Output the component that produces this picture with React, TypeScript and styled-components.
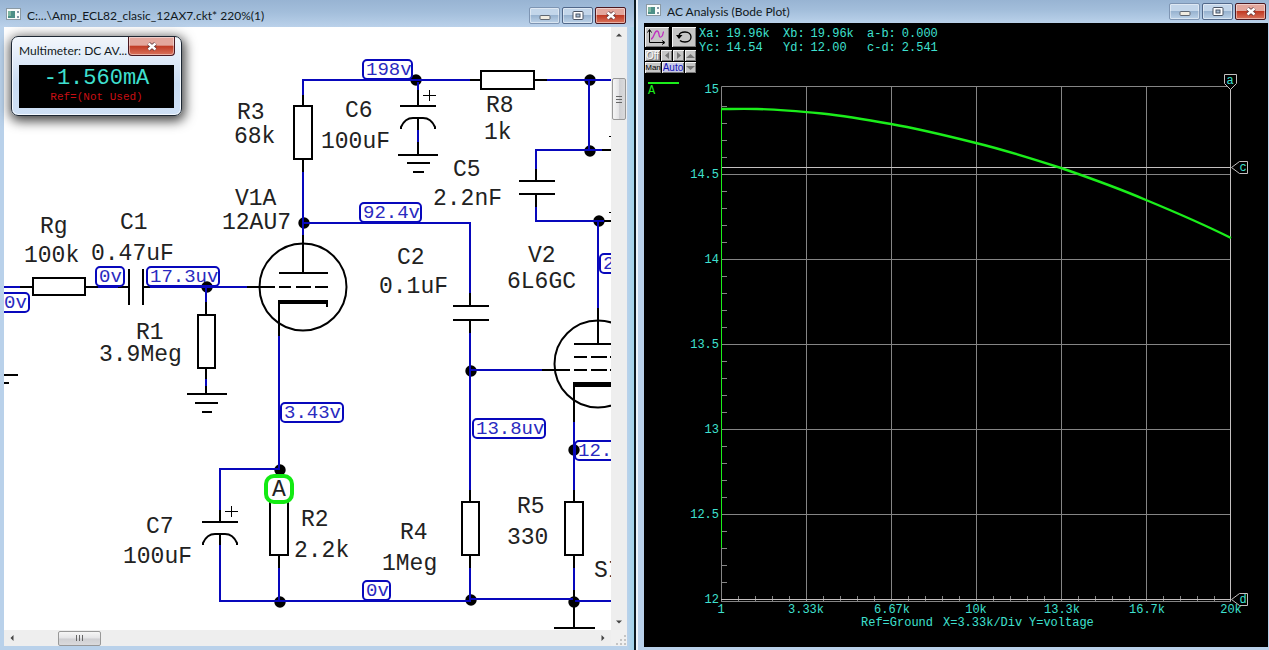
import React from "react";
import styled, { createGlobalStyle, css } from "styled-components";

const MONO = '"Liberation Mono", "Courier New", monospace';
const UI = 'Lato, "Segoe UI", sans-serif';
const WIRE = "#0808bc";
const INK = "#000";
const CYAN = "#3fe0d0";
const TRACE = "#1bee1b";

const GlobalStyle = createGlobalStyle`
  *, *::before, *::after { box-sizing: border-box; }
  body { margin: 0; background: #b9d1ea; }
  button { font: inherit; padding: 0; margin: 0; }
`;

/* ---------- Window frames ---------- */

const Desktop = styled.main`
  display: grid;
  grid-template-columns: minmax(0, 636fr) minmax(0, 633fr);
  min-height: 100vh;
  background: #b9d1ea;
`;

const SchematicWindow = styled.section`
  display: flex;
  flex-direction: column;
  padding: 0 7px 4px 4px;
  background: linear-gradient(90deg, #b9d1ea 0 99%, #9fd4ea 100%);
  border-right: 2px solid #0b1a22;
`;

const PlotWindow = styled.section`
  display: flex;
  flex-direction: column;
  padding: 0 1px 3px 6px;
  border-left: 2px solid #eef5fb;
  background: #b9d1ea;
`;

const TitleBar = styled.header<{ $height: number; $top: number }>`
  display: flex;
  align-items: flex-start;
  gap: 5px;
  height: ${(p) => p.$height}px;
  padding-top: ${(p) => p.$top}px;
  margin: 0 -7px 0 -4px;
  padding-left: 6px;
  padding-right: 8px;
  background: linear-gradient(#98b4d3, #a3bedb 45%, #bad1ea);
`;

const PlotTitleBar = styled(TitleBar)`
  margin: 0 -1px 0 -6px;
  padding-left: 8px;
  padding-right: 3px;
`;

const Title = styled.h1`
  flex: 1;
  min-width: 0;
  margin: 0;
  overflow: hidden;
  font: 400 12px/17px ${UI};
  color: #101820;
  white-space: nowrap;
`;

const Controls = styled.div`
  display: flex;
  gap: 2px;
`;

const ControlButton = styled.button<{ $kind?: "min" | "max" | "close" }>`
  display: grid;
  place-items: center;
  width: 31px;
  height: 17px;
  border: 1px solid #51688a;
  border-radius: 2px;
  background: linear-gradient(#c3d6ea 0 48%, #98b3d0 50%, #bcd2e8);
  box-shadow: inset 0 0 0 1px rgba(255, 255, 255, 0.45);
  ${(p) => p.$kind === "min" && css`border-color: #7e95b3;`}
  ${(p) =>
    p.$kind === "close" &&
    css`
      border-color: #4b1820;
      background: linear-gradient(#e3a79d 0 46%, #c03a24 50%, #d9735c);
    `}
`;

const MeterClose = styled(ControlButton)`
  width: 47px;
  height: 19px;
  border-top: 0;
  border-radius: 0 0 4px 4px;
`;

function WindowIcon() {
  return (
    <svg width="16" height="14" viewBox="0 0 16 14" aria-hidden="true">
      <rect x="0.5" y="1.5" width="14" height="11" fill="#f8fbfb" stroke="#8b9aa4" />
      <rect x="2" y="4" width="7" height="7" fill="#4c8f88" />
      <rect x="2" y="4" width="3" height="5" fill="#7db5a0" />
      <rect x="11" y="4" width="2" height="2" fill="#8298a8" />
      <rect x="11" y="9" width="2" height="2" fill="#8298a8" />
    </svg>
  );
}

function CloseGlyph() {
  return (
    <svg width="12" height="9" viewBox="0 0 12 9" aria-hidden="true">
      <path d="M2.5 1.5 L9.5 7.5 M9.5 1.5 L2.5 7.5" stroke="#5d3438" strokeWidth="4" />
      <path d="M2.5 1.5 L9.5 7.5 M9.5 1.5 L2.5 7.5" stroke="#fff" strokeWidth="2.4" />
    </svg>
  );
}

function WindowControls() {
  return (
    <Controls>
      <ControlButton $kind="min" aria-label="Minimize">
        <svg width="12" height="9" viewBox="0 0 12 9" aria-hidden="true">
          <rect x="1" y="4.5" width="10" height="4" rx="1" fill="#f1ece0" stroke="#5f6670" />
        </svg>
      </ControlButton>
      <ControlButton $kind="max" aria-label="Maximize">
        <svg width="12" height="9" viewBox="0 0 12 9" aria-hidden="true">
          <rect x="1" y="0.5" width="10" height="8" rx="1" fill="#fff" stroke="#4a5464" />
          <rect x="4" y="3" width="4" height="3" fill="#a9bed4" stroke="#4a5464" />
        </svg>
      </ControlButton>
      <ControlButton $kind="close" aria-label="Close">
        <CloseGlyph />
      </ControlButton>
    </Controls>
  );
}

/* ---------- Schematic pane ---------- */

const ScrollPane = styled.div`
  position: relative;
  display: grid;
  flex: 1;
  grid-template-columns: minmax(0, 1fr) 16px;
  grid-template-rows: minmax(0, 1fr) 16px;
  min-height: 619px;
  background: #f0f0f0;
`;

const SchematicSvg = styled.svg`
  display: block;
  width: 100%;
  height: 100%;
  background: #fff;
  overflow: hidden;
`;

const ScrollTrack = styled.div<{ $vertical?: boolean }>`
  display: flex;
  flex-direction: ${(p) => (p.$vertical ? "column" : "row")};
  align-items: center;
  justify-content: space-between;
  padding: ${(p) => (p.$vertical ? "4px 0" : "0 4px")};
  background: #eeeeee;
`;

const ScrollThumb = styled.div<{ $vertical?: boolean }>`
  display: grid;
  place-items: center;
  border: 1px solid #989898;
  border-radius: 2px;
  width: ${(p) => (p.$vertical ? "14px" : "43px")};
  height: ${(p) => (p.$vertical ? "42px" : "15px")};
  margin: ${(p) => (p.$vertical ? "39px 0 auto" : "0 auto 0 42px")};
  background: linear-gradient(
    ${(p) => (p.$vertical ? "90deg" : "180deg")},
    #f6f6f6,
    #e4e4e6 48%,
    #cfcfd2 52%,
    #dadadc
  );
`;

const Grip = styled.svg`
  place-self: end;
  display: block;
`;

function Arrow({ d }: { d: string }) {
  return (
    <svg width="8" height="8" viewBox="0 0 8 8" aria-hidden="true">
      <path d={d} fill="#444" />
    </svg>
  );
}

type Pt = [number, number];

const blueWires = [
  "M303 96V80H470", "M547 80H611", "M589 80V150", "M602 150H536V170",
  "M536 207V221H604", "M598 221V308", "M303 172V240", "M303 223H470V294",
  "M470 333V490", "M471 370H542", "M574 422V490", "M574 568V590",
  "M470 568V601", "M4 287H20", "M97 287H118", "M150 287H247", "M206 287V303",
  "M206 379V386", "M279 336V469", "M280 469H220V510", "M220 545V601H471",
  "M471 599H574", "M574 601H611", "M279 568V601",
  "M418 82V92", "M418 130V142",
];

const blackWires = [
  "M303 95V106", "M303 159V172", "M470 80H481", "M534 80H547",
  "M602 150H611", "M536 169V181", "M519 181H555", "M519 194H555", "M536 194V207",
  "M604 221H611", "M418 90V106", "M400 106H436",
  "M401 129V127Q405 118 413 118H423Q431 118 435 127V129",
  "M418 118V130", "M418 142V155", "M398 155H438", "M407 163H430", "M413 172H424",
  "M470 293V306", "M453 306H489", "M453 320H489", "M470 320V333",
  "M470 490V502", "M470 555V568", "M574 490V502", "M574 555V568",
  "M574 590V628", "M554 628H595", "M20 287H33", "M85 287H98",
  "M118 287H129", "M129 269V305", "M143 269V305", "M143 287H150",
  "M206 302V315", "M206 368V379", "M206 386V394",
  "M187 394H227", "M195 403H218", "M202 412H212", "M4 375H18", "M4 383H9",
  "M220 510V522", "M202 522H238",
  "M203 545V543Q207 534 215 534H225Q233 534 237 543V545",
  "M220 534V545", "M279 555V568",
  "M303 235V273", "M279 273H328", "M247 287H275", "M279 287H291",
  "M296 287H311", "M315 287H328", "M279 336V301", "M327 301V307",
  "M598 308V344", "M574 344H611", "M574 357H587", "M591 357H607", "M610 357H612",
  "M542 370H570", "M574 370H587", "M591 370H607", "M610 370H612", "M574 384V422",
];

const resistors: [number, number, number, number][] = [
  [294, 106, 18, 53], [481, 71, 53, 18], [33, 278, 52, 17], [198, 315, 17, 53],
  [462, 502, 17, 53], [565, 502, 18, 53], [270, 502, 18, 53],
];

const nodes: Pt[] = [
  [416, 80], [590, 80], [590, 151], [599, 221], [304, 223], [471, 371],
  [574, 450], [207, 287], [280, 470], [280, 602], [471, 600], [574, 602],
];

const partLabels: [string, number, number][] = [
  ["R3", 237, 119], ["68k", 234, 143], ["C6", 345, 117], ["100uF", 321, 148],
  ["R8", 486, 112], ["1k", 484, 139], ["C5", 453, 176], ["2.2nF", 433, 205],
  ["V1A", 235, 205], ["12AU7", 222, 229], ["Rg", 40, 233], ["100k", 24, 262],
  ["C1", 120, 229], ["0.47uF", 91, 260], ["R1", 136, 339], ["3.9Meg", 99, 361],
  ["C2", 397, 264], ["0.1uF", 379, 293], ["V2", 528, 262], ["6L6GC", 507, 288],
  ["R2", 301, 526], ["2.2k", 294, 557], ["C7", 146, 533], ["100uF", 123, 563],
  ["R4", 400, 539], ["1Meg", 382, 570], ["R5", 517, 513], ["330", 507, 544],
  ["SI", 594, 577],
];

const voltages: { text: string; x: number; y: number; w: number }[] = [
  { text: "198v", x: 363, y: 60, w: 49 },
  { text: "92.4v", x: 360, y: 203, w: 61 },
  { text: "0v", x: 96, y: 267, w: 28 },
  { text: "17.3uv", x: 147, y: 267, w: 72 },
  { text: "0v", x: 1, y: 293, w: 28 },
  { text: "3.43v", x: 281, y: 403, w: 62 },
  { text: "13.8uv", x: 473, y: 419, w: 72 },
  { text: "0v", x: 363, y: 581, w: 27 },
  { text: "2", x: 600, y: 254, w: 50 },
  { text: "12.", x: 575, y: 441, w: 60 },
];

function Schematic() {
  return (
    <SchematicSvg role="img" aria-label="Amplifier schematic">
      <g transform="translate(-4 -27)" fill="none" strokeWidth="2">
        <g fill={INK}>
          {nodes.map(([x, y]) => (
            <circle key={`${x}-${y}`} cx={x} cy={y} r="5.7" />
          ))}
        </g>
        <path d={blueWires.join("")} stroke={WIRE} />
        <path d={blackWires.join("")} stroke={INK} />
        <g stroke={INK} fill="#fff">
          {resistors.map(([x, y, w, h]) => (
            <rect key={`${x}-${y}`} x={x} y={y} width={w} height={h} />
          ))}
        </g>
        <g stroke={INK}>
          <circle cx="303" cy="287" r="43.5" />
          <circle cx="598" cy="364" r="43.5" />
          <path d="M278 302H328" strokeWidth="4" />
          <path d="M573 384.500H611" strokeWidth="5" />
          <path d="M423 95.500H436M429.500 90V101M225 511.500H238M231.500 506V517" strokeWidth="1" />
          <path d="M609 136.500H611M609 212.500H611" strokeWidth="1" />
        </g>
        <g stroke={WIRE}>
          {voltages.map((v) => (
            <rect key={`${v.x}-${v.y}`} x={v.x} y={v.y} width={v.w} height="19" rx="4" />
          ))}
        </g>
        <g fontFamily={MONO} fontSize="19" fill="#2a2ac0">
          {voltages.map((v) => (
            <text key={`${v.x}-${v.y}`} x={v.x + 3} y={v.y + 15}>{v.text}</text>
          ))}
        </g>
        <g fontFamily={MONO} fontSize="23" fill="#222">
          {partLabels.map(([t, x, y]) => (
            <text key={`${t}-${x}`} x={x} y={y}>{t}</text>
          ))}
        </g>
        <rect x="266" y="476" width="26" height="26" rx="8" fill="#fff" stroke="#12ea12" strokeWidth="4" />
        <text x="279" y="496" textAnchor="middle" fontFamily={MONO} fontSize="23" fill="#222">A</text>
      </g>
    </SchematicSvg>
  );
}

/* ---------- Multimeter ---------- */

const Meter = styled.aside`
  position: absolute;
  top: 9px;
  left: 7px;
  width: 171px;
  padding: 0 7px 7px;
  border: 1px solid #1d2733;
  border-radius: 7px;
  background: linear-gradient(#f3f7fc, #dfeaf8 30%, #c9dcf3 60%, #cfe0f5);
  box-shadow: inset 0 0 0 1px #f4f9ff, 1px 3px 12px 2px rgba(0, 0, 0, 0.75);
`;

const MeterHeader = styled.header`
  display: flex;
  justify-content: space-between;
  height: 28px;
  margin-right: -1px;
`;

const MeterTitle = styled.h2`
  margin: 0;
  padding-top: 5px;
  font: 400 12px/17px ${UI};
  color: #101820;
  white-space: nowrap;
`;

const MeterDisplay = styled.div`
  display: flex;
  flex-direction: column;
  align-items: center;
  height: 43px;
  padding-top: 2px;
  background: #000;
  font-family: ${MONO};
`;

const Reading = styled.output`
  font-size: 22px;
  line-height: 23px;
  color: ${CYAN};
`;

const Reference = styled.span`
  font-size: 11px;
  line-height: 14px;
  color: #c80f14;
`;

/* ---------- Bode plot ---------- */

const PlotPanel = styled.div`
  flex: 1;
  background: #000;
`;

const PlotHeader = styled.div`
  display: flex;
  gap: 3px;
  height: 51px;
  padding: 4px 0 0 1px;
`;

const Toolbar = styled.div`
  display: flex;
  flex-direction: column;
  width: 51px;
`;

const ToolRow = styled.div`
  display: flex;
  justify-content: space-between;
  margin-bottom: 1px;
  &:first-child { margin-bottom: 3px; }
`;

const ToolButton = styled.button<{ $w: number; $tall?: boolean; $tone?: string; $font?: number }>`
  display: flex;
  align-items: center;
  justify-content: center;
  width: ${(p) => p.$w}px;
  height: ${(p) => (p.$tall ? 20 : 11)}px;
  border: 0;
  box-shadow: inset 1px 1px #f4f4f4, inset -1px -1px #777;
  background: ${(p) => (p.$tone === "blue" ? "#c9cbe8" : "#c6c6c6")};
  color: ${(p) => (p.$tone === "blue" ? "#1414b4" : p.$tone === "off" ? "#fafafa" : "#000")};
  text-shadow: ${(p) => (p.$tone === "off" ? "1px 1px 0 #777" : "none")};
  font: 400 ${(p) => p.$font ?? 10}px/11px "Liberation Sans", Arial, sans-serif;
`;

const Readouts = styled.dl`
  display: grid;
  grid-template-columns: repeat(3, 84px);
  grid-auto-rows: 14px;
  margin: 0;
  font: 400 12px/14px ${MONO};
  color: ${CYAN};
  white-space: pre;
`;

const Readout = styled.div`
  display: flex;
  gap: 6px;
  dt, dd { margin: 0; }
`;

const Chart = styled.svg`
  display: block;
  width: 100%;
`;

const readings = [
  ["Xa:", "19.96k"], ["Xb:", "19.96k"], ["a-b:", "0.000"],
  ["Yc:", "14.54"], ["Yd:", "12.00"], ["c-d:", "2.541"],
];

const xGrid = [806.5, 891.5, 976.5, 1061.5, 1146.5];
const yGrid = [174.5, 259.5, 344.5, 429.5, 514.5];
const xLabels: [string, number][] = [
  ["1", 721], ["3.33k", 806], ["6.67k", 892], ["10k", 976],
  ["13.3k", 1062], ["16.7k", 1147], ["20k", 1231],
];
const yLabels: [string, number][] = [
  ["15", 93], ["14.5", 178], ["14", 263], ["13.5", 348], ["13", 433], ["12.5", 518], ["12", 603],
];

const yTicks = Array.from({ length: 29 }, (_, i) => 106.5 + i * 17);
const xTicks = Array.from({ length: 29 }, (_, i) => 738.5 + i * 17);

function BodeChart() {
  return (
    <Chart viewBox="644 74 624 573" role="img" aria-label="Voltage against frequency">
      <g stroke="#858585" fill="none">
        <path d={xGrid.map((x) => `M${x} 86V601`).join("")} />
        <path d={yGrid.map((y) => `M721 ${y}H1231`).join("")} />
        <path d="M721.500 601V86.500H1230" />
        <path d={yTicks.map((y) => `M722 ${y}H727`).join("")} />
        <path d={xTicks.map((x) => `M${x} 596V601`).join("")} />
        <path d="M721 601.500H1231" />
      </g>
      <g stroke="#c4c0c0" fill="#000">
        <path d="M1230.500 88V601M721 167.500H1231M721 599.500H1231" />
        <path d="M1224.500 74.500H1236.500V83.500L1230.500 89.500L1224.500 83.500Z" />
        <path d="M1231.500 167.500L1239.500 161.500H1247.500V173.500H1239.500Z" />
        <path d="M1231.500 599.500L1239.500 593.500H1247.500V605.500H1239.500Z" />
      </g>
      <g stroke={TRACE} fill="none">
        <path d="M721.500 109V548" strokeWidth="1" />
        <path
          d="M721 109C730 109 745 108.700 757 109C779 109.500 806 112 822 113.500C846 116 869 120 891 124C920 129 948 136 976 143C1005 150 1033 159 1061 168C1090 178 1118 188 1146 200C1175 212 1203 224 1231 238"
          strokeWidth="2.400"
        />
        <path d="M648 83H679" strokeWidth="2" />
      </g>
      <g fontFamily={MONO} fontSize="12" fill={CYAN}>
        <text x="648" y="94" fill={TRACE}>A</text>
        <g textAnchor="end">
          {yLabels.map(([t, y]) => <text key={t} x="719" y={y}>{t}</text>)}
        </g>
        <g textAnchor="middle">
          {xLabels.map(([t, x]) => <text key={t} x={x} y="613">{t}</text>)}
          <text x="1230" y="84">a</text>
          <text x="1243" y="171">c</text>
          <text x="1243" y="603">d</text>
        </g>
        <text x="861" y="626">Ref=Ground</text>
        <text x="943" y="626">X=3.33k/Div</text>
        <text x="1029" y="626">Y=voltage</text>
      </g>
    </Chart>
  );
}

export default function App() {
  return (
    <>
      <GlobalStyle />
      <Desktop>
        <SchematicWindow>
          <TitleBar $height={27} $top={7}>
            <WindowIcon />
            <Title>C:...\Amp_ECL82_clasic_12AX7.ckt* 220%(1)</Title>
            <WindowControls />
          </TitleBar>
          <ScrollPane>
            <Schematic />
            <ScrollTrack $vertical>
              <Arrow d="M1 5.500L4 2.500L7 5.500Z" />
              <ScrollThumb $vertical>
                <svg width="8" height="9" viewBox="0 0 8 9" aria-hidden="true">
                  <path d="M1 1.500H7M1 4.500H7M1 7.500H7" stroke="#666" />
                </svg>
              </ScrollThumb>
              <Arrow d="M1 2.500L4 5.500L7 2.500Z" />
            </ScrollTrack>
            <ScrollTrack>
              <Arrow d="M5.500 1L2.500 4L5.500 7Z" />
              <ScrollThumb>
                <svg width="9" height="8" viewBox="0 0 9 8" aria-hidden="true">
                  <path d="M1.500 1V7M4.500 1V7M7.500 1V7" stroke="#666" />
                </svg>
              </ScrollThumb>
              <Arrow d="M2.500 1L5.500 4L2.500 7Z" />
            </ScrollTrack>
            <Grip width="12" height="12" viewBox="0 0 12 12" aria-hidden="true">
              <path d="M1 9h2v2h-2zM5 9h2v2h-2zM9 9h2v2h-2zM5 5h2v2h-2zM9 5h2v2h-2zM9 1h2v2h-2z" fill="#c4c4c4" />
            </Grip>
            <Meter>
              <MeterHeader>
                <MeterTitle>Multimeter: DC AV...</MeterTitle>
                <MeterClose $kind="close" aria-label="Close multimeter">
                  <CloseGlyph />
                </MeterClose>
              </MeterHeader>
              <MeterDisplay>
                <Reading>-1.560mA</Reading>
                <Reference>Ref=(Not Used)</Reference>
              </MeterDisplay>
            </Meter>
          </ScrollPane>
        </SchematicWindow>

        <PlotWindow>
          <PlotTitleBar $height={23} $top={3}>
            <WindowIcon />
            <Title>AC Analysis (Bode Plot)</Title>
            <WindowControls />
          </PlotTitleBar>
          <PlotPanel>
            <PlotHeader>
              <Toolbar>
                <ToolRow>
                  <ToolButton $w={24} $tall aria-label="Scale axes">
                    <svg width="22" height="18" viewBox="0 0 22 18" fill="none" aria-hidden="true">
                      <path d="M3.500 2V14.500H18M1.500 4.500L3.500 1.500L5.500 4.500M16 12.500L19 14.500L16 16.500" stroke="#000" />
                      <path d="M5 11C8 11 8 3 11 3S12 10 15 9S16 4 18 4" stroke="#c030c0" strokeWidth="1.300" />
                    </svg>
                  </ToolButton>
                  <ToolButton $w={24} $tall aria-label="Reset">
                    <svg width="22" height="18" viewBox="0 0 22 18" fill="none" aria-hidden="true">
                      <path d="M6 8C6 5 9 4 12 4C16 4 18 6.500 18 9S16 14 12 14C10 14 8 13.500 7 12.500" stroke="#000" strokeWidth="1.300" />
                      <path d="M3 7H9.500L6 11Z" fill="#000" />
                    </svg>
                  </ToolButton>
                </ToolRow>
                <ToolRow>
                  <ToolButton $w={15} $tone="off">Off</ToolButton>
                  <ToolButton $w={11} aria-label="Previous">
                    <svg width="8" height="9" viewBox="0 0 8 9" aria-hidden="true"><path d="M6 1L2 4.500L6 8Z" fill="#777" /></svg>
                  </ToolButton>
                  <ToolButton $w={11} aria-label="Next">
                    <svg width="8" height="9" viewBox="0 0 8 9" aria-hidden="true"><path d="M2 1L6 4.500L2 8Z" fill="#777" /></svg>
                  </ToolButton>
                  <ToolButton $w={11} aria-label="Up">
                    <svg width="9" height="8" viewBox="0 0 9 8" aria-hidden="true"><path d="M0 6L4.500 2L9 6Z" fill="#777" /></svg>
                  </ToolButton>
                </ToolRow>
                <ToolRow>
                  <ToolButton $w={16} $font={8}>Man</ToolButton>
                  <ToolButton $w={22} $tone="blue">Auto</ToolButton>
                  <ToolButton $w={11} aria-label="Down">
                    <svg width="9" height="8" viewBox="0 0 9 8" aria-hidden="true"><path d="M0 2L4.500 6L9 2Z" fill="#777" /></svg>
                  </ToolButton>
                </ToolRow>
              </Toolbar>
              <Readouts>
                {readings.map(([k, v]) => (
                  <Readout key={k}>
                    <dt>{k}</dt>
                    <dd>{v}</dd>
                  </Readout>
                ))}
              </Readouts>
            </PlotHeader>
            <BodeChart />
          </PlotPanel>
        </PlotWindow>
      </Desktop>
    </>
  );
}
